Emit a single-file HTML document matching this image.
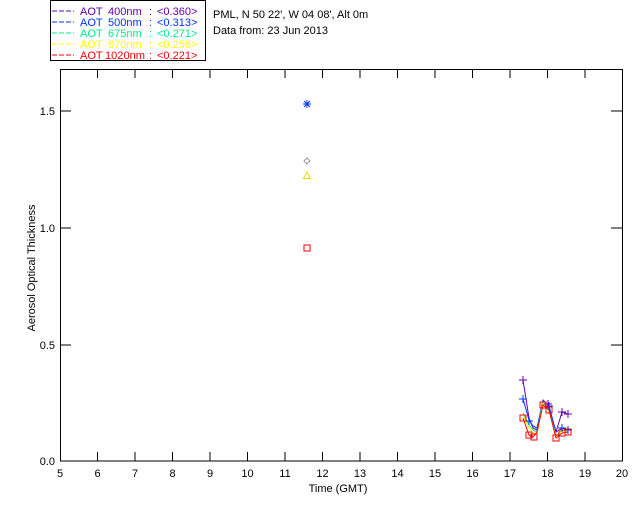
<!DOCTYPE html>
<html><head><style>
body{margin:0;background:#fff;width:640px;height:512px;overflow:hidden}
svg text{font-family:"Liberation Sans",sans-serif;font-size:11px}
</style></head><body>
<svg width="640" height="512" xmlns="http://www.w3.org/2000/svg">
<rect x="50.5" y="0.5" width="155" height="60" fill="none" stroke="#000"/>
<g font-size="11">
<g fill="#6600aa"><path d="M52 11h22" stroke="#6600aa" stroke-dasharray="5 2"/><text x="80" y="15">AOT</text><text x="108" y="15">400nm</text><text x="149" y="15">:</text><text x="157" y="15">&lt;0.360&gt;</text></g>
<g fill="#0033ff"><path d="M52 22h22" stroke="#0033ff" stroke-dasharray="5 2"/><text x="80" y="26">AOT</text><text x="108" y="26">500nm</text><text x="149" y="26">:</text><text x="157" y="26">&lt;0.313&gt;</text></g>
<g fill="#00ee88"><path d="M52 33h22" stroke="#00ee88" stroke-dasharray="5 2"/><text x="80" y="37">AOT</text><text x="108" y="37">675nm</text><text x="149" y="37">:</text><text x="157" y="37">&lt;0.271&gt;</text></g>
<g fill="#ffff00"><path d="M52 44h22" stroke="#ffff00" stroke-dasharray="5 2"/><text x="80" y="48">AOT</text><text x="108" y="48">870nm</text><text x="149" y="48">:</text><text x="157" y="48">&lt;0.256&gt;</text></g>
<g fill="#ff0000"><path d="M52 55h22" stroke="#ff0000" stroke-dasharray="5 2"/><text x="80" y="59">AOT</text><text x="105" y="59" textLength="40" lengthAdjust="spacingAndGlyphs">1020nm</text><text x="149" y="59">:</text><text x="157" y="59">&lt;0.221&gt;</text></g>
</g>
<text x="213" y="18">PML, N 50 22', W 04 08', Alt 0m</text>
<text x="213" y="34">Data from: 23 Jun 2013</text>
<rect x="60.5" y="69.5" width="562" height="391.5" fill="none" stroke="#000"/>
<g stroke="#000">
<path d="M97.5 461v-9M135 461v-9M172.5 461v-9M210 461v-9M247.5 461v-9M285 461v-9M322.5 461v-9M360 461v-9M397.5 461v-9M435 461v-9M472.5 461v-9M510 461v-9M547.5 461v-9M585 461v-9"/>
<path d="M97.5 70v8M135 70v8M172.5 70v8M210 70v8M247.5 70v8M285 70v8M322.5 70v8M360 70v8M397.5 70v8M435 70v8M472.5 70v8M510 70v8M547.5 70v8M585 70v8"/>
<path d="M60 111h11M60 228h11M60 345h11M622 111h-11M622 228h-11M622 345h-11"/>
</g>
<g text-anchor="middle">
<text x="60" y="477">5</text><text x="97.5" y="477">6</text><text x="135" y="477">7</text><text x="172.5" y="477">8</text><text x="210" y="477">9</text><text x="247.5" y="477">10</text><text x="285" y="477">11</text><text x="322.5" y="477">12</text><text x="360" y="477">13</text><text x="397.5" y="477">14</text><text x="435" y="477">15</text><text x="472.5" y="477">16</text><text x="510" y="477">17</text><text x="547.5" y="477">18</text><text x="585" y="477">19</text><text x="622" y="477">20</text>
<text x="338" y="492">Time (GMT)</text>
</g>
<g text-anchor="end">
<text x="55" y="115">1.5</text><text x="55" y="232">1.0</text><text x="55" y="349">0.5</text><text x="55" y="465">0.0</text>
</g>
<text transform="translate(35 268) rotate(-90)" text-anchor="middle" font-size="10">Aerosol Optical Thickness</text>
<path d="M303 104h8M307 100v8M304 101l6 6M310 101l-6 6" stroke="#0033ff"/>
<path d="M307 158l3 3-3 3-3-3z" fill="none" stroke="#999"/>
<path d="M307 172l3.5 6.5h-7z" fill="none" stroke="#dddd00"/>
<rect x="304" y="245" width="6" height="6" fill="none" stroke="#f00"/>
<g fill="none" stroke-width="1">
<polyline stroke="#6600aa" points="523,380 529,418 533,428 537,430 543,404 549,408 556,432 562,412 568,414"/>
<polyline stroke="#0033ff" points="523,399 529,420 533,426 537,428 543,400 549,406 556,432 562,428 568,430"/>
<polyline stroke="#00ee88" points="523,413 529,425 533,430 537,432 543,402 549,410 556,436 562,430 568,432"/>
<polyline stroke="#ffff00" points="523,415 529,428 533,433 537,434 543,403 549,411 556,437 562,431 568,432"/>
<polyline stroke="#ff0000" points="523,418 529,435 533,437 537,432 543,405 549,410 556,438 562,433 568,432"/>
</g>
<g stroke="#6600aa"><path d="M519 380h8M523 376v8M544 404h8M548 400v8M558 412h8M562 408v8M564 414h8M568 410v8"/></g>
<g stroke="#0033ff"><path d="M519 399h8M523 395v8M525 421h8M529 417v8M545 406h8M549 402v8M558 428h8M562 424v8M564 430h8M568 426v8"/></g>
<g fill="none" stroke="#ff0000">
<rect x="520" y="415" width="6" height="6"/><rect x="526" y="432" width="6" height="6"/><rect x="531" y="434" width="6" height="6"/><rect x="540" y="402" width="6" height="6"/><rect x="546" y="407" width="6" height="6"/><rect x="553" y="435" width="6" height="6"/><rect x="559" y="430" width="6" height="6"/><rect x="565" y="429" width="6" height="6"/>
</g>
</svg>
</body></html>
